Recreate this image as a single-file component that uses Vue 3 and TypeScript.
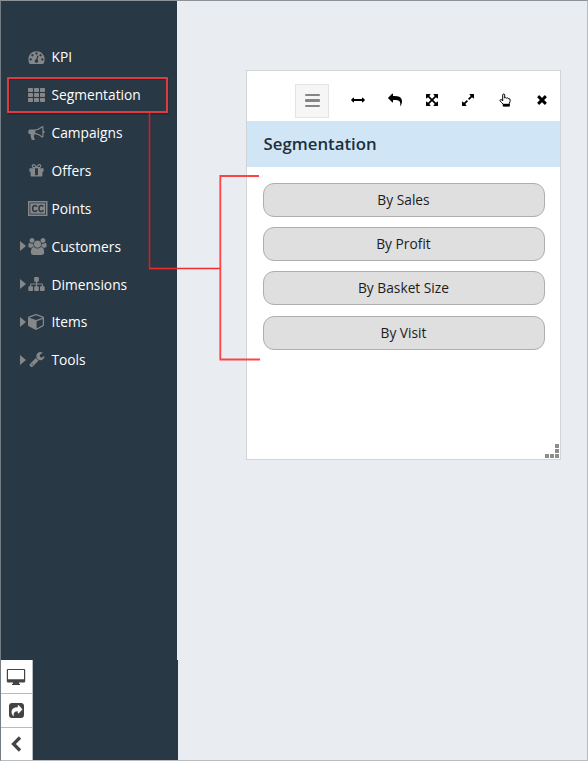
<script setup lang="ts">
interface Glyph {
  box: string
  d: string
}

interface MenuItem {
  label: string
  icon: string
  width: number
  height: number
  expandable?: boolean
}

const glyphs: Record<string, Glyph> = {
  kpi: {
    box: '0 128 1792 1536',
    d: 'M384 1152q0-53-37.5-90.5t-90.5-37.5-90.5 37.5-37.5 90.5 37.5 90.5 90.5 37.5 90.5-37.5 37.5-90.5zm192-448q0-53-37.5-90.5t-90.5-37.5-90.5 37.5-37.5 90.5 37.5 90.5 90.5 37.5 90.5-37.5 37.5-90.5zm428 481l101-382q6-26-7.5-48.5t-38.5-29.5-48 6.5-30 39.5l-101 382q-60 5-107 43.5t-63 98.5q-20 77 20 146t117 89 146-20 89-117q16-60-6-117t-72-91zm660-33q0-53-37.5-90.5t-90.5-37.5-90.5 37.5-37.5 90.5 37.5 90.5 90.5 37.5 90.5-37.5 37.5-90.5zm-640-640q0-53-37.5-90.5t-90.5-37.5-90.5 37.5-37.5 90.5 37.5 90.5 90.5 37.5 90.5-37.5 37.5-90.5zm448 192q0-53-37.5-90.5t-90.5-37.5-90.5 37.5-37.5 90.5 37.5 90.5 90.5 37.5 90.5-37.5 37.5-90.5zm320 448q0 261-141 483-19 29-54 29h-1402q-35 0-54-29-141-221-141-483 0-182 71-348t191-286 286-191 348-71 348 71 286 191 191 286 71 348z',
  },
  grid: {
    box: '0 0 17 14',
    d: 'M.7 0h3.6q.7 0 .7.7v2.6q0 .7-.7.7H.7q-.7 0-.7-.7V.7Q0 0 .7 0zm6 0h3.6q.7 0 .7.7v2.6q0 .7-.7.7H6.7q-.7 0-.7-.7V.7q0-.7.7-.7zm6 0h3.6q.7 0 .7.7v2.6q0 .7-.7.7h-3.6q-.7 0-.7-.7V.7q0-.7.7-.7zM.7 5h3.6q.7 0 .7.7v2.6q0 .7-.7.7H.7Q0 9 0 8.300V5.700Q0 5 .7 5zm6 0h3.6q.7 0 .7.7v2.6q0 .7-.7.7H6.700Q6 9 6 8.300V5.700Q6 5 6.700 5zm6 0h3.600q.7 0 .7.7v2.600q0 .7-.7.7h-3.600q-.7 0-.7-.7V5.700q0-.7.7-.7zM.7 10h3.600q.7 0 .7.7v2.600q0 .7-.7.7H.7q-.7 0-.7-.7v-2.600q0-.7.7-.7zm6 0h3.600q.7 0 .7.7v2.600q0 .7-.7.7H6.700q-.7 0-.7-.7v-2.600q0-.7.7-.7zm6 0h3.600q.7 0 .7.7v2.600q0 .7-.7.7h-3.600q-.7 0-.7-.7v-2.600q0-.7.7-.7z',
  },
  bullhorn: {
    box: '0 128 1792 1536',
    d: 'M1664 640q53 0 90.5 37.5t37.5 90.5-37.5 90.5-90.5 37.5v384q0 52-38 90t-90 38q-417-347-812-380-58 19-91 66t-31 100.5 40 92.5q-20 33-23 65.5t6 58 33.5 55 48 50 61.5 50.5q-29 58-111.5 83t-168.5 11.5-132-55.5q-7-23-29.5-87.5t-32-94.5-23-89-15-101 3.5-98.5 22-110.5h-122q-66 0-113-47t-47-113v-192q0-66 47-113t113-47h480q435 0 896-384 52 0 90 38t38 90v384zm-128 604v-954q-394 302-768 343v270q377 42 768 341z',
  },
  gift: {
    box: '128 192 1536 1408',
    d: 'M1056 1356v-716h-320v716q0 25 18 38.5t46 13.5h192q28 0 46-13.5t18-38.5zm-456-844h195l-126-161q-26-31-69-31-40 0-68 28t-28 68 28 68 68 28zm688-96q0-40-28-68t-68-28q-43 0-69 31l-125 161h194q40 0 68-28t28-68zm376 256v320q0 14-9 23t-23 9h-96v416q0 40-28 68t-68 28h-1088q-40 0-68-28t-28-68v-416h-96q-14 0-23-9t-9-23v-320q0-14 9-23t23-9h440q-93 0-158.5-65.5t-65.5-158.5 65.5-158.5 158.5-65.5q107 0 168 77l128 165 128-165q61-77 168-77 93 0 158.5 65.500t65.500 158.500-65.500 158.500-158.500 65.500h440q14 0 23 9t9 23z',
  },
  users: {
    box: '-64 0 1920 1792',
    d: 'M529 896q-162 5-265 128h-134q-82 0-138-40.5t-56-118.5q0-353 124-353 6 0 43.500 21t97.500 42.500 119 21.500q67 0 133-23-5 37-5 66 0 139 81 256zm1071 637q0 120-73 189.500t-194 69.500h-874q-121 0-194-69.500t-73-189.500q0-53 3.500-103.500t14-109 26.500-108.500 43-97.500 62-81 85.500-53.500 111.500-20q10 0 43 21.500t73 48 107 48 135 21.500 135-21.500 107-48 73-48 43-21.500q61 0 111.500 20t85.500 53.500 62 81 43 97.500 26.500 108.500 14 109 3.500 103.500zm-1024-1277q0 106-75 181t-181 75-181-75-75-181 75-181 181-75 181 75 75 181zm704 384q0 159-112.500 271.500t-271.500 112.500-271.500-112.500-112.500-271.500 112.500-271.500 271.500-112.500 271.500 112.500 112.500 271.500zm576 225q0 78-56 118.500t-138 40.500h-134q-103-123-265-128 81-117 81-256 0-29-5-66 66 23 133 23 59 0 119-21.500t97.500-42.500 43.500-21q124 0 124 353zm-128-609q0 106-75 181t-181 75-181-75-75-181 75-181 181-75 181 75 75 181z',
  },
  sitemap: {
    box: '0 128 1792 1536',
    d: 'M1792 1248v320q0 40-28 68t-68 28h-320q-40 0-68-28t-28-68v-320q0-40 28-68t68-28h96v-192h-512v192h96q40 0 68 28t28 68v320q0 40-28 68t-68 28h-320q-40 0-68-28t-28-68v-320q0-40 28-68t68-28h96v-192h-512v192h96q40 0 68 28t28 68v320q0 40-28 68t-68 28h-320q-40 0-68-28t-28-68v-320q0-40 28-68t68-28h96v-192q0-52 38-90t90-38h512v-192h-96q-40 0-68-28t-28-68v-320q0-40 28-68t68-28h320q40 0 68 28t28 68v320q0 40-28 68t-68 28h-96v192h512q52 0 90 38t38 90v192h96q40 0 68 28t28 68z',
  },
  cube: {
    box: '0 128 1664 1664',
    d: 'M896 1629l640-349v-636l-640 233v752zm-64-865l698-254-698-254-698 254zm832-252v768q0 35-18 65t-49 47l-704 384q-28 16-61 16t-61-16l-704-384q-31-17-49-47t-18-65v-768q0-40 23-73t61-47l704-256q22-8 44-8t44 8l704 256q38 14 61 47t23 73z',
  },
  wrench: {
    box: '85 128 1641 1643',
    d: 'M448 1472q0-26-19-45t-45-19-45 19-19 45 19 45 45 19 45-19 19-45zm644-420l-682 682q-37 37-90 37-52 0-91-37l-106-108q-38-36-38-90 0-53 38-91l681-681q39 98 114.500 173.500t173.500 114.500zm634-435q0 39-23 106-47 134-164.500 217.500t-258.500 83.500q-185 0-316.500-131.500t-131.500-316.500 131.500-316.500 316.500-131.500q58 0 121.500 16.500t107.500 46.500q16 11 16 28t-16 28l-293 169v224l193 107q5-3 79-48.500t135.500-81 70.500-35.500q15 0 23.500 10t8.500 25z',
  },
  'arrows-h': {
    box: '0 0 1792 1792',
    d: 'M1792 896q0 26-19 45l-256 256q-19 19-45 19t-45-19-19-45v-128h-1024v128q0 26-19 45t-45 19-45-19l-256-256q-19-19-19-45t19-45l256-256q19-19 45-19t45 19 19 45v128h1024v-128q0-26 19-45t45-19 45 19l256 256q19 19 19 45z',
  },
  reply: {
    box: '0 0 1792 1792',
    d: 'M1792 1120q0 166-127 451-3 7-10.500 24t-13.500 30-13 22q-12 17-28 17-15 0-23.500-10t-8.500-25q0-9 2.500-26.500t2.500-23.500q5-68 5-123 0-101-17.500-181t-48.500-138.500-80-101-105.500-69.500-133-42.500-154-21.500-175.500-6h-224v256q0 26-19 45t-45 19-45-19l-512-512q-19-19-19-45t19-45l512-512q19-19 45-19t45 19 19 45v256h224q713 0 875 403 53 134 53 333z',
  },
  'arrows-alt': {
    box: '0 0 1792 1792',
    d: 'M1411 541l-355 355 355 355 144-144q29-31 70-14 39 17 39 59v448q0 26-19 45t-45 19h-448q-42 0-59-40-17-39 14-69l144-144-355-355-355 355 144 144q31 30 14 69-17 40-59 40h-448q-26 0-45-19t-19-45v-448q0-42 40-59 39-17 69 14l144 144 355-355-355-355-144 144q-19 19-45 19-12 0-24-5-40-17-40-59v-448q0-26 19-45t45-19h448q42 0 59 40 17 39-14 69l-144 144 355 355 355-355-144-144q-31-30-14-69 17-40 59-40h448q26 0 45 19t19 45v448q0 42-39 59-13 5-25 5-26 0-45-19z',
  },
  expand: {
    box: '0 0 1792 1792',
    d: 'M883 1056q0 13-10 23l-332 332 144 144q19 19 19 45t-19 45-45 19h-448q-26 0-45-19t-19-45v-448q0-26 19-45t45-19 45 19l144 144 332-332q10-10 23-10t23 10l114 114q10 10 10 23zm781-864v448q0 26-19 45t-45 19-45-19l-144-144-332 332q-10 10-23 10t-23-10l-114-114q-10-10-10-23t10-23l332-332-144-144q-19-19-19-45t19-45 45-19h448q26 0 45 19t19 45z',
  },
  close: {
    box: '0 64 1792 1792',
    d: 'M1490 1322q0 40-28 68l-136 136q-28 28-68 28t-68-28l-294-294-294 294q-28 28-68 28t-68-28l-136-136q-28-28-28-68t28-68l294-294-294-294q-28-28-28-68t28-68l136-136q28-28 68-28t68 28l294 294 294-294q28-28 68-28t68 28l136 136q28 28 28 68t-28 68l-294 294 294 294q28 28 28 68z',
  },
}

const menu: MenuItem[] = [
  { label: 'KPI', icon: 'kpi', width: 17, height: 14 },
  { label: 'Segmentation', icon: 'grid', width: 17, height: 14 },
  { label: 'Campaigns', icon: 'bullhorn', width: 17, height: 14 },
  { label: 'Offers', icon: 'gift', width: 17, height: 13 },
  { label: 'Points', icon: 'cc', width: 20, height: 15 },
  { label: 'Customers', icon: 'users', width: 19, height: 17, expandable: true },
  { label: 'Dimensions', icon: 'sitemap', width: 17, height: 14, expandable: true },
  { label: 'Items', icon: 'cube', width: 16, height: 16, expandable: true },
  { label: 'Tools', icon: 'wrench', width: 18, height: 15, expandable: true },
]

const tools: string[] = ['arrows-h', 'reply', 'arrows-alt', 'expand', 'hand', 'close']
const options: string[] = ['By Sales', 'By Profit', 'By Basket Size', 'By Visit']
</script>

<template>
  <div class="screen">
    <aside class="sidebar">
      <nav class="menu">
        <a v-for="item in menu" :key="item.label" class="menu-item">
          <span class="caret-slot"><i v-if="item.expandable" class="caret"></i></span>
          <span class="icon-slot">
            <svg v-if="item.icon === 'cc'" width="20" height="15" viewBox="0 0 20 15">
              <rect x=".75" y=".75" width="18" height="13.500" fill="none" stroke="currentColor" stroke-width="1.500" />
              <rect x="2.300" y="2.300" width="14.900" height="10.400" fill="currentColor" />
              <path class="cc-mark" d="M9 5.800Q8.600 4.500 6.900 4.500Q4.700 4.500 4.700 7.500T6.900 10.500Q8.600 10.500 9 9M15.300 5.800Q14.900 4.500 13.200 4.500Q11 4.500 11 7.500T13.200 10.500Q14.900 10.500 15.300 9" />
            </svg>
            <svg v-else :width="item.width" :height="item.height" :viewBox="glyphs[item.icon].box">
              <path :d="glyphs[item.icon].d" fill="currentColor" />
            </svg>
          </span>
          <span>{{ item.label }}</span>
        </a>
      </nav>
      <div class="sidebar-foot">
        <div class="dock">
          <button class="dock-button">
            <svg width="20" height="18" viewBox="0 0 20 18">
              <path fill="currentColor" fill-rule="evenodd" d="M2 1h16q1.200 0 1.200 1.200v11q0 1.200-1.200 1.200h-5v1.400h1V17h-8v-1.200h1v-1.400H2Q.8 14.400.8 13.200v-11Q.8 1 2 1zm0 1v9.300h16V2z" />
            </svg>
          </button>
          <button class="dock-button">
            <svg width="15" height="15" viewBox="0 0 1536 1536">
              <path fill="currentColor" fill-rule="evenodd" d="M288 0h960q119 0 203.500 84.500T1536 288v960q0 119-84.500 203.500T1248 1536H288q-119 0-203.500-84.500T0 1248V288Q0 169 84.500 84.500T288 0zM1005 1043l336-345q19-19 19-45t-19-45L1005 237q-29-30-70-13-39 16-39 59v160Q256 443 256 930q0 245 180 420 13 10 30 3 17-8 14-28-66-474 416-474v147q0 43 39 59 41 16 70-14z" />
            </svg>
          </button>
          <button class="dock-button">
            <svg width="14" height="16" viewBox="0 0 14 16">
              <path d="M11 1.500L4.500 8l6.500 6.500" fill="none" stroke="currentColor" stroke-width="3.200" />
            </svg>
          </button>
        </div>
      </div>
    </aside>

    <main class="workspace">
      <section class="panel">
        <div class="toolbar">
          <button class="menu-toggle">
            <i></i><i></i><i></i>
          </button>
          <div class="tool-list">
            <button v-for="tool in tools" :key="tool" class="tool">
              <svg v-if="tool === 'hand'" width="14" height="14" viewBox="0 0 14 14">
                <path d="M4.700 8V2.100Q4.700 1 5.700 1T6.700 2.100V5Q7.500 4.200 8.400 5.100Q9.500 4.500 10.200 5.500Q12.200 5.200 12.200 7.200Q12.200 9 11.300 10.300V12.900H5.200V11.100Q3.600 9.600 2.300 8.300Q1.500 7 2.700 6.500Q3.700 6.300 4.700 8z" fill="none" stroke="currentColor" stroke-width="1" stroke-linejoin="round" />
                <path d="M5 10.800h6.500V13.400H5z" fill="currentColor" />
              </svg>
              <svg v-else width="14" height="14" :viewBox="glyphs[tool].box">
                <path :d="glyphs[tool].d" fill="currentColor" />
              </svg>
            </button>
          </div>
        </div>
        <h2 class="panel-title">Segmentation</h2>
        <div class="options">
          <button v-for="option in options" :key="option" class="option">{{ option }}</button>
        </div>
        <div class="grip">
          <svg width="14" height="14" viewBox="0 0 14 14" fill="currentColor">
            <path d="M10 0h4v4h-4zM10 5h4v4h-4zM0 10h4v4H0zM5 10h4v4H5zM10 10h4v4h-4z" />
          </svg>
        </div>
      </section>
    </main>

    <svg class="callout" width="588" height="761" viewBox="0 0 588 761" fill="none">
      <rect class="shade" x="9" y="79" width="159" height="35" />
      <rect class="frame" x="8" y="78" width="159" height="34" />
      <path class="stem" d="M149.500 113V268.500" />
      <path class="stem-end" d="M149 268.500H220" />
      <path class="bracket" d="M259 176H220.300V359.500H260" />
    </svg>
  </div>
</template>

<style>
body {
  margin: 0;
}
</style>

<style scoped>
.screen {
  position: relative;
  display: flex;
  box-sizing: border-box;
  width: 588px;
  height: 761px;
  border: 1px solid #b9bdc1;
  border-top-color: #8b9298;
  border-left-color: #747d84;
  background: #e9edf2;
  font-family: 'Open Sans', 'Liberation Sans', sans-serif;
  font-size: 13.750px;
}

button {
  padding: 0;
  border: 0;
  background: none;
  font: inherit;
  color: inherit;
}

svg {
  display: block;
}

.sidebar {
  display: flex;
  flex-direction: column;
  justify-content: space-between;
  width: 176px;
  background: #283845;
}

.menu {
  padding-top: 37px;
}

.menu-item {
  display: flex;
  align-items: center;
  height: 37.860px;
  color: #fff;
}

.caret-slot {
  width: 8px;
  padding-left: 19px;
}

.caret {
  display: block;
  width: 0;
  border: 5px solid transparent;
  border-right: 0;
  border-left: 6px solid #858789;
}

.icon-slot {
  display: flex;
  width: 18px;
  margin-right: 5.500px;
  color: #858789;
}

.icon-slot svg {
  flex: none;
}

.cc-mark {
  fill: none;
  stroke: #283845;
  stroke-width: 1.500;
}

.sidebar-foot {
  margin-right: -1px;
  background: #283845;
}

.dock {
  display: flex;
  flex-direction: column;
  gap: 1px;
  width: 31px;
  padding-right: 1px;
  background: #b9bcbe;
}

.dock-button {
  display: flex;
  align-items: center;
  justify-content: center;
  height: 33px;
  padding-right: 1px;
  background: #fff;
  color: #444;
}

.dock-button:last-child {
  height: 32px;
}

.workspace {
  flex: 1;
  padding: 69px 0 0 69px;
}

.panel {
  display: flex;
  flex-direction: column;
  box-sizing: border-box;
  width: 315px;
  height: 390px;
  border: 1px solid #d2d4d6;
  background: #fff;
}

.toolbar {
  display: flex;
  align-items: center;
  height: 50px;
  padding: 0 1px 0 48px;
}

.menu-toggle {
  display: flex;
  flex-direction: column;
  align-items: center;
  justify-content: center;
  gap: 3px;
  box-sizing: border-box;
  width: 34px;
  height: 34px;
  margin-top: 9px;
  border: 1px solid #e4e4e4;
  background: #f6f6f6;
}

.menu-toggle i {
  width: 15px;
  height: 2.200px;
  border-radius: 1px;
  background: #858585;
}

.tool-list {
  display: flex;
  flex: 1;
  justify-content: space-between;
  padding: 8px 10px 0 22px;
}

.tool {
  color: #000;
}

.panel-title {
  height: 46px;
  margin: 0;
  padding-left: 16.500px;
  background: #d0e6f6;
  color: #212f39;
  font-size: 16.800px;
  font-weight: 600;
  line-height: 46px;
}

.options {
  display: flex;
  flex: 1;
  flex-direction: column;
  gap: 10.200px;
  padding: 16px 15.500px 0;
}

.option {
  box-sizing: border-box;
  height: 34px;
  padding-bottom: 1px;
  border: 1px solid #aeaeae;
  border-radius: 11px;
  background: #dfdfdf;
  color: #1c1c1c;
}

.grip {
  display: flex;
  justify-content: flex-end;
  padding: 0 1.500px 1px 0;
  color: #8d8d8d;
}

.callout {
  position: absolute;
  top: -1px;
  left: -1px;
  pointer-events: none;
}

.shade {
  stroke: #17232d;
  stroke-width: 1.500;
  opacity: 0.5;
}

.frame {
  stroke: #f23c41;
  stroke-width: 1.800;
}

.stem {
  stroke: #e8161c;
  stroke-width: 1.500;
}

.stem-end {
  stroke: #f22c31;
  stroke-width: 1.400;
}

.bracket {
  stroke: #fb4448;
  stroke-width: 1.800;
}
</style>
